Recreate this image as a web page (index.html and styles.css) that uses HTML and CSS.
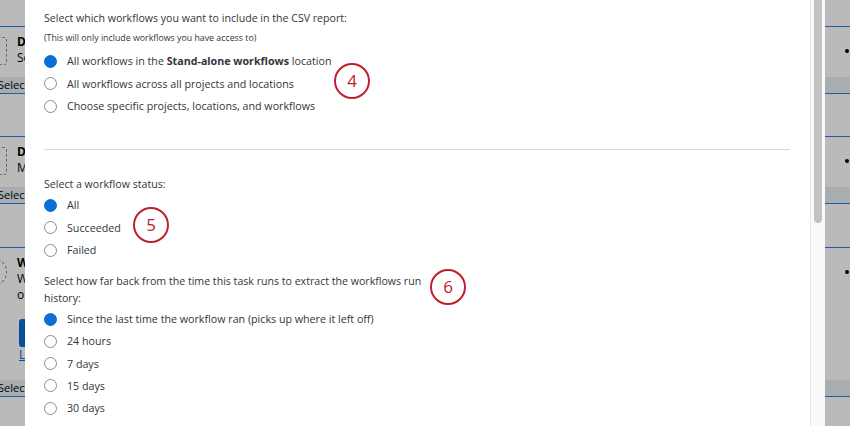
FILE: index.html
```html
<!DOCTYPE html>
<html>
<head>
    <meta charset="UTF-8">
    <link rel="stylesheet" href="styles.css">
</head>
<body>
<div class="page">
    <div class="card">
        <div class="card-main">
            <div class="card-icon"></div>
            <div class="card-text">
                <div class="card-title">Daily workflow report</div>
                <div class="card-sub">Send the report by email</div>
            </div>
            <div class="card-menu"></div>
        </div>
        <div class="card-foot">Select a task</div>
    </div>
    <div class="card card-two">
        <div class="card-main">
            <div class="card-icon"></div>
            <div class="card-text">
                <div class="card-title">Data export</div>
                <div class="card-sub">Move files to storage</div>
            </div>
            <div class="card-menu"></div>
        </div>
        <div class="card-foot">Select a task</div>
    </div>
    <div class="card card-three">
        <div class="card-main">
            <div class="card-icon round"></div>
            <div class="card-text">
                <div class="card-title">Workflow run history</div>
                <div class="card-sub">Writes the run history of your workflows</div>
                <div class="card-sub">on a schedule you pick</div>
                <div class="card-button">Add</div>
                <div class="card-link">Learn more</div>
            </div>
            <div class="card-menu"></div>
        </div>
        <div class="card-foot">Select a task</div>
    </div>
</div>

<div class="overlay"></div>

<div class="modal">
    <div class="modal-body">

        <div class="group">
            <p class="prompt">Select which workflows you want to include in the CSV report:</p>
            <p class="note">(This will only include workflows you have access to)</p>
            <div class="options">
                <label class="option"><span class="radio checked"></span><span>All workflows in the <b>Stand-alone workflows</b> location</span></label>
                <label class="option"><span class="radio"></span><span>All workflows across all projects and locations</span></label>
                <label class="option"><span class="radio"></span><span>Choose specific projects, locations, and workflows</span></label>
            </div>
        </div>

        <div class="divider"></div>

        <div class="group status">
            <p class="prompt">Select a workflow status:</p>
            <div class="options">
                <label class="option"><span class="radio checked"></span><span>All</span></label>
                <label class="option"><span class="radio"></span><span>Succeeded</span></label>
                <label class="option"><span class="radio"></span><span>Failed</span></label>
            </div>
        </div>

        <div class="group history">
            <p class="prompt">Select how far back from the time this task runs to extract the workflows run history:</p>
            <div class="options">
                <label class="option"><span class="radio checked"></span><span>Since the last time the workflow ran (picks up where it left off)</span></label>
                <label class="option"><span class="radio"></span><span>24 hours</span></label>
                <label class="option"><span class="radio"></span><span>7 days</span></label>
                <label class="option"><span class="radio"></span><span>15 days</span></label>
                <label class="option"><span class="radio"></span><span>30 days</span></label>
            </div>
        </div>

    </div>
    <div class="scrollbar">
        <div class="thumb"></div>
    </div>

    <span class="marker m4">4</span>
    <span class="marker m5">5</span>
    <span class="marker m6">6</span>
</div>
</body>
</html>
```

FILE: styles.css
```css
* {
    margin: 0;
    padding: 0;
    box-sizing: border-box;
}

body {
    width: 850px;
    height: 426px;
    overflow: hidden;
    position: relative;
    background-color: #ffffff;
    font-family: "Open Sans", "Liberation Sans", sans-serif;
    color: #32363a;
}

/* page behind the dialog */
.page {
    padding-top: 26px;
}

.card {
    border-top: 1px solid #2b7de9;
    border-bottom: 1px solid #2b7de9;
    margin-bottom: 42px;
}

.card-two {
    margin-bottom: 43px;
}

.card-main {
    display: flex;
    align-items: flex-start;
    height: 50px;
    padding-top: 10px;
}

.card-three .card-main {
    height: 132px;
}

.card-icon {
    width: 28px;
    height: 28px;
    margin-left: -21px;
    border: 1px dashed #8a8a8a;
    border-radius: 3px;
    flex-shrink: 0;
}

.card-icon.round {
    border-radius: 14px;
}

.card-text {
    margin-left: 10px;
    margin-top: -3px;
    font-size: 12px;
    line-height: 16px;
    color: #000;
}

.card-title {
    font-weight: 700;
}

.card-button {
    width: 70px;
    height: 28px;
    margin-top: 16px;
    margin-left: 2px;
    border-radius: 3px;
    background-color: #0b6ed6;
    color: #fff;
    line-height: 28px;
    text-align: center;
}

.card-link {
    margin-left: 2px;
    color: #0b6ed6;
    text-decoration: underline;
}

.card-menu {
    width: 4px;
    height: 4px;
    margin-left: auto;
    margin-right: 1px;
    margin-top: 12px;
    border-radius: 2px;
    background-color: #000;
}

.card-foot {
    height: 16px;
    margin-left: -2px;
    background-color: #e8edf3;
    font-size: 11px;
    line-height: 16px;
    color: #000;
}

.overlay {
    position: absolute;
    top: 0;
    left: 0;
    right: 0;
    bottom: 0;
    background-color: rgba(0, 0, 0, 0.27);
}

/* dialog */
.modal {
    position: absolute;
    top: 0;
    left: 25px;
    width: 800px;
    height: 426px;
    display: flex;
    background-color: #ffffff;
}

.modal-body {
    flex: 1;
    padding: 10px 20px 0 19px;
}

.prompt {
    font-size: 10.6px;
    line-height: 17px;
}

.note {
    margin-top: 4px;
    font-size: 8.8px;
    line-height: 14px;
}

.options {
    margin-top: 1.5px;
}

.group .note + .options {
    margin-top: 5px;
}

.option {
    display: flex;
    align-items: center;
    height: 22.5px;
    font-size: 10.7px;
}

.history .option {
    height: 22.25px;
}

.radio {
    width: 13px;
    height: 13px;
    margin-right: 10px;
    border: 1px solid #8c8c8c;
    border-radius: 50%;
    background-color: #fff;
    flex-shrink: 0;
}

.radio.checked {
    border-color: #0b6fd4;
    background-color: #0b6fd4;
}

.divider {
    height: 1px;
    margin-top: 31px;
    background-color: #d9d9d9;
}

.status {
    margin-top: 26px;
}

.history {
    margin-top: 11px;
}

.history .prompt {
    max-width: 385px;
}

.scrollbar {
    width: 15px;
    height: 100%;
    border-left: 1px solid #e6e6e6;
    background-color: #fafafa;
    padding-left: 3px;
}

.thumb {
    width: 8px;
    height: 223px;
    border-radius: 0 0 4px 4px;
    background-color: #c2c2c2;
}

/* numbered call-outs drawn over the dialog */
.marker {
    position: absolute;
    width: 36px;
    height: 36px;
    border: 2px solid #c0202e;
    border-radius: 50%;
    color: #c0202e;
    font-family: "Open Sans", "Liberation Sans", sans-serif;
    font-size: 17px;
    line-height: 32px;
    text-align: center;
}

.m4 {
    left: 309px;
    top: 63px;
}

.m5 {
    left: 108px;
    top: 207px;
}

.m6 {
    left: 405px;
    top: 269px;
}
```
